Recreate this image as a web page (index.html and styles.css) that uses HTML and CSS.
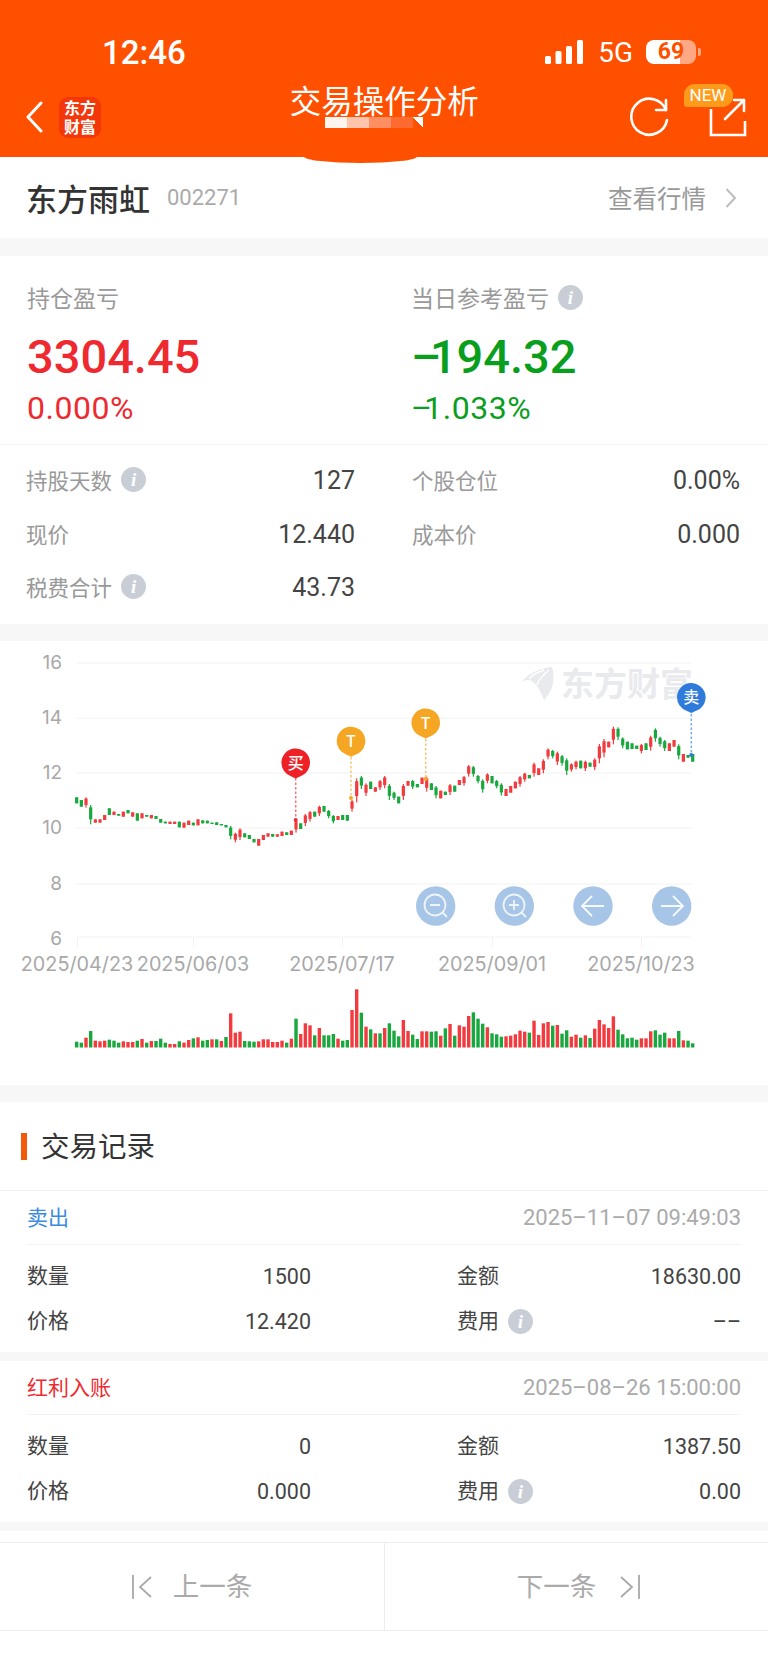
FILE: index.html
```html
<!DOCTYPE html>
<html lang="zh-CN">
<head>
    <meta charset="UTF-8">
    <meta name="viewport" content="width=device-width, initial-scale=1.0">
    <title>交易操作分析</title>
    <link rel="stylesheet" href="styles.css">
</head>
<body>
    <div class="page">
        <header class="header">
            <div class="status">
                <span class="time">12:46</span>
                <div class="status-right">
                    <svg class="signal" width="38" height="24" viewBox="0 0 38 24">
                        <rect x="0" y="16" width="6" height="8" rx="1.5"/>
                        <rect x="10.500" y="11" width="6" height="13" rx="1.5"/>
                        <rect x="21" y="6" width="6" height="18" rx="1.5"/>
                        <rect x="32" y="0" width="6" height="24" rx="1.5"/>
                    </svg>
                    <span class="network">5G</span>
                    <span class="battery">69</span>
                </div>
            </div>
            <div class="nav">
                <div class="nav-left">
                    <svg class="back" width="18" height="32" viewBox="0 0 18 32">
                        <path d="M16 2 L3 16 L16 30" fill="none" stroke="#fff" stroke-width="3" stroke-linecap="round" stroke-linejoin="round"/>
                    </svg>
                    <div class="logo">东方<br>财富</div>
                </div>
                <div class="title">交易操作分析</div>
                <div class="nav-right">
                    <svg class="refresh" width="40" height="40" viewBox="0 0 40 40">
                        <path d="M37 13 A18 18 0 1 0 38 23" fill="none" stroke="#fff" stroke-width="2.600" stroke-linecap="round"/>
                        <path d="M27 13 H37 V3" fill="none" stroke="#fff" stroke-width="2.600" stroke-linecap="round" stroke-linejoin="round"/>
                    </svg>
                    <div class="share-box">
                        <svg class="share" width="38" height="40" viewBox="0 0 38 40">
                            <path d="M2 12 V38 H36 V24" fill="none" stroke="#fff" stroke-width="2.600"/>
                            <path d="M16 22 L35 3 M25 3 H35 V14" fill="none" stroke="#fff" stroke-width="2.600" stroke-linecap="round" stroke-linejoin="round"/>
                        </svg>
                        <span class="new-badge">NEW</span>
                    </div>
                </div>
            </div>
            <div class="blob"></div>
            <div class="mosaic">
                <i class="m1"></i><i class="m2"></i><i class="m3"></i><i class="m4"></i><i class="m5"></i>
            </div>
        </header>

        <section class="stock">
            <div class="stock-name">
                <span class="name">东方雨虹</span>
                <span class="code">002271</span>
            </div>
            <div class="stock-link">
                <span>查看行情</span>
                <svg width="12" height="22" viewBox="0 0 12 22">
                    <path d="M1.500 2 L10 11 L1.500 20" fill="none" stroke="#bdbdbd" stroke-width="2"/>
                </svg>
            </div>
        </section>

        <section class="summary">
            <div class="pl">
                <div class="pl-col">
                    <div class="pl-label">持仓盈亏</div>
                    <div class="pl-value red">3304.45</div>
                    <div class="pl-rate red">0.000%</div>
                </div>
                <div class="pl-col">
                    <div class="pl-label">当日参考盈亏<span class="info">i</span></div>
                    <div class="pl-value green"><span class="dash">–</span>194.32</div>
                    <div class="pl-rate green"><span class="dash">–</span>1.033%</div>
                </div>
            </div>
            <div class="stats">
                <div class="stat"><span class="stat-label">持股天数<span class="info">i</span></span><span class="stat-value">127</span></div>
                <div class="stat"><span class="stat-label">个股仓位</span><span class="stat-value">0.00%</span></div>
                <div class="stat"><span class="stat-label">现价</span><span class="stat-value">12.440</span></div>
                <div class="stat"><span class="stat-label">成本价</span><span class="stat-value">0.000</span></div>
                <div class="stat"><span class="stat-label">税费合计<span class="info">i</span></span><span class="stat-value">43.73</span></div>
            </div>
        </section>

        <section class="chart">
            <svg class="chart-svg" width="768" height="444" viewBox="0 641 768 444">
                <g class="grid">
                    <path d="M77 663 H691 M77 718 H691 M77 773 H691 M77 828 H691 M77 884 H691 M77 937 H691"/>
                    <path d="M77.500 937 V947 M193.500 937 V947 M342.500 937 V947 M492.500 937 V947 M641.500 937 V947"/>
                </g>
                <g class="watermark">
                    <path d="M552 667 C556 680 552 692 544 700 C541 692 538 686 532 681 C528 679 525 680 522 682 C527 674 540 668 552 667 Z"/>
                    <path class="watermark-cut" d="M549 670 C544 674 539 679 537 685 M544 670 C538 672 532 675 529 679"/>
                    <text x="561" y="696">东方财富</text>
                </g>
                <g class="y-labels">
                    <text x="62" y="669">16</text>
                    <text x="62" y="724">14</text>
                    <text x="62" y="779">12</text>
                    <text x="62" y="834">10</text>
                    <text x="62" y="890">8</text>
                    <text x="62" y="945">6</text>
                </g>
                <g class="x-labels">
                    <text x="77" y="971">2025/04/23</text>
                    <text x="193" y="971">2025/06/03</text>
                    <text x="342" y="971">2025/07/17</text>
                    <text x="492" y="971">2025/09/01</text>
                    <text x="641" y="971">2025/10/23</text>
                </g>
                <g id="candles"></g>
                <g id="volume"></g>

                <path class="pin-line" d="M295.700 778 V820" stroke="#f2525a"/>
                <circle cx="295.700" cy="820" r="2" fill="#ee2a30"/>
                <path d="M281.400 762.700 A14.300 14.300 0 1 1 300.500 776.200 L295.700 778.500 L290.900 776.200 A14.300 14.300 0 0 1 281.400 762.700 Z" fill="#ee2126"/>
                <text class="pin-text" x="295.700" y="768.500">买</text>

                <path class="pin-line" d="M351 757 V798" stroke="#f6b64a"/>
                <circle cx="351" cy="798" r="2" fill="#f5a623"/>
                <path d="M336.700 741 A14.300 14.300 0 1 1 355.800 754.500 L351 756.800 L346.200 754.500 A14.300 14.300 0 0 1 336.700 741 Z" fill="#f5a623"/>
                <text class="pin-text" x="351" y="747">T</text>

                <path class="pin-line" d="M425.700 739 V779" stroke="#f6b64a"/>
                <circle cx="425.700" cy="779" r="2" fill="#f5a623"/>
                <path d="M411.400 722.700 A14.300 14.300 0 1 1 430.500 736.200 L425.700 738.500 L420.900 736.200 A14.300 14.300 0 0 1 411.400 722.700 Z" fill="#f5a623"/>
                <text class="pin-text" x="425.700" y="729">T</text>

                <path class="pin-line" d="M691.300 714 V755" stroke="#5a96e2"/>
                <circle cx="691.300" cy="755" r="2" fill="#2f7bdc"/>
                <path d="M677 697.300 A14.300 14.300 0 1 1 696.100 710.800 L691.300 713.100 L686.500 710.800 A14.300 14.300 0 0 1 677 697.300 Z" fill="#2f7bdc"/>
                <text class="pin-text" x="691.300" y="703">卖</text>

                <g class="zoom-btn">
                    <circle cx="435.700" cy="906" r="19.700"/>
                    <g class="zoom-icon">
                        <circle cx="435" cy="905" r="10.500"/>
                        <path d="M430 905 H440 M442.500 912.500 L447 917"/>
                    </g>
                    <circle cx="514.300" cy="906" r="19.700"/>
                    <g class="zoom-icon">
                        <circle cx="514" cy="905" r="10.500"/>
                        <path d="M509 905 H519 M514 900 V910 M521.500 912.500 L526 917"/>
                    </g>
                    <circle cx="593" cy="906" r="19.700"/>
                    <path class="zoom-icon" d="M604 906 H582 M592 896 L582 906 L592 916"/>
                    <circle cx="671.700" cy="906" r="19.700"/>
                    <path class="zoom-icon" d="M661 906 H683 M673 896 L683 906 L673 916"/>
                </g>
            </svg>
        </section>

        <section class="records">
            <h2 class="records-title"><span>交易记录</span></h2>
            <div class="record">
                <div class="record-head">
                    <span class="record-type blue">卖出</span>
                    <span class="record-time">2025–11–07 09:49:03</span>
                </div>
                <div class="record-body">
                    <div class="cell"><span class="cell-label">数量</span><span class="cell-value">1500</span></div>
                    <div class="cell"><span class="cell-label">金额</span><span class="cell-value">18630.00</span></div>
                    <div class="cell"><span class="cell-label">价格</span><span class="cell-value">12.420</span></div>
                    <div class="cell"><span class="cell-label">费用<span class="info">i</span></span><span class="cell-value">––</span></div>
                </div>
            </div>
            <div class="record">
                <div class="record-head">
                    <span class="record-type red">红利入账</span>
                    <span class="record-time">2025–08–26 15:00:00</span>
                </div>
                <div class="record-body">
                    <div class="cell"><span class="cell-label">数量</span><span class="cell-value">0</span></div>
                    <div class="cell"><span class="cell-label">金额</span><span class="cell-value">1387.50</span></div>
                    <div class="cell"><span class="cell-label">价格</span><span class="cell-value">0.000</span></div>
                    <div class="cell"><span class="cell-label">费用<span class="info">i</span></span><span class="cell-value">0.00</span></div>
                </div>
            </div>
        </section>

        <footer class="footer">
            <div class="pager">
                <div class="pager-btn">
                    <svg width="20" height="26" viewBox="0 0 20 26">
                        <path d="M1 1 V25 M19 3 L8 13 L19 23" fill="none" stroke="#a8a8a8" stroke-width="1.800"/>
                    </svg>
                    <span class="pager-text">上一条</span>
                </div>
                <div class="pager-btn next">
                    <span class="pager-text">下一条</span>
                    <svg width="20" height="26" viewBox="0 0 20 26">
                        <path d="M19 1 V25 M1 3 L12 13 L1 23" fill="none" stroke="#a8a8a8" stroke-width="1.800"/>
                    </svg>
                </div>
            </div>
        </footer>
    </div>

    <script src="chart.js"></script>
</body>
</html>
```

FILE: styles.css
```css
body {
    margin: 0;
    font-family: Roboto, "Noto Sans CJK SC", sans-serif;
    background-color: #fff;
    color: #444;
}

.page {
    width: 768px;
    min-height: 1666px;
    background-color: #f7f7f7;
    display: flex;
    flex-direction: column;
}

.red {
    color: #ee2a30;
}

.green {
    color: #0a9e1e;
}

.blue {
    color: #3d8ae0;
}

/* header */
.header {
    position: relative;
    height: 157px;
    background-color: #ff5000;
    color: #fff;
}

.status {
    height: 60px;
    padding: 22px 72px 0 102px;
    display: flex;
    justify-content: space-between;
    align-items: center;
}

.time {
    font-size: 33px;
    font-weight: 500;
}

.status-right {
    display: flex;
    align-items: center;
}

.signal {
    fill: #fff;
    margin-right: 15px;
}

.network {
    font-size: 28px;
    margin-right: 13px;
}

.battery {
    position: relative;
    width: 50px;
    height: 24px;
    border-radius: 8px;
    background: linear-gradient(90deg, #fff 68%, #ffa884 68%);
    color: #ff5000;
    font-size: 23px;
    font-weight: 700;
    line-height: 24px;
    text-align: center;
}

.battery::after {
    content: "";
    position: absolute;
    left: 52px;
    top: 8px;
    width: 3px;
    height: 8px;
    border-radius: 0 2px 2px 0;
    background-color: #ffa884;
}

.nav {
    height: 70px;
    padding: 0 21.500px 0 25px;
    display: grid;
    grid-template-columns: 1fr auto 1fr;
    align-items: center;
}

.nav-left {
    display: flex;
    align-items: center;
    gap: 16px;
}

.logo {
    width: 42px;
    height: 41px;
    border-radius: 9px;
    background-color: #f4370b;
    font-size: 16px;
    font-weight: 700;
    line-height: 19px;
    padding-top: 2px;
    box-sizing: border-box;
    text-align: center;
}

.title {
    font-size: 31.500px;
    line-height: 34px;
    margin: 0 3px 28px 0;
}

.nav-right {
    display: flex;
    justify-content: flex-end;
    align-items: center;
    gap: 40px;
}

.share-box {
    position: relative;
    display: flex;
}

.new-badge {
    position: absolute;
    left: -25px;
    top: -13px;
    width: 49px;
    height: 23px;
    border-radius: 11px 11px 11px 3px;
    background-color: #ff9b1a;
    font-size: 17px;
    line-height: 23px;
    text-align: center;
}

.blob {
    position: absolute;
    left: 304px;
    top: 150px;
    width: 113px;
    height: 13px;
    border-radius: 50%;
    background-color: #ff5000;
}

.mosaic {
    position: absolute;
    left: 325px;
    top: 117px;
    display: flex;
}

.mosaic i {
    width: 22px;
    height: 11px;
}

.mosaic .m1 {
    background-color: #fff5f0;
}

.mosaic .m2 {
    background-color: #ffc4ac;
}

.mosaic .m3 {
    background-color: #ff8f62;
}

.mosaic .m4 {
    background-color: #ff6a30;
}

.mosaic .m5 {
    width: 10px;
    background: linear-gradient(45deg, #fff 50%, #ff5000 50%);
    transform: scaleY(-1) scaleX(-1);
}

/* stock row */
.stock {
    height: 81px;
    padding: 0 31px 0 26px;
    background-color: #fff;
    display: flex;
    justify-content: space-between;
    align-items: center;
    margin-bottom: 18px;
}

.stock-name {
    display: flex;
    align-items: center;
    gap: 17px;
}

.name {
    font-size: 31px;
    font-weight: 500;
    color: #333;
}

.code {
    font-size: 22px;
    color: #aaa;
}

.stock-link {
    display: flex;
    align-items: center;
    gap: 19px;
    font-size: 24.500px;
    color: #999;
}

/* summary */
.summary {
    background-color: #fff;
    margin-bottom: 17px;
}

.pl {
    padding: 26px 0 18px 27px;
    display: grid;
    grid-template-columns: 384px 1fr;
    border-bottom: 1px solid #f2f2f2;
}

.pl-label {
    display: flex;
    align-items: center;
    height: 30px;
    font-size: 23px;
    color: #999;
}

.pl-value {
    height: 56px;
    line-height: 56px;
    margin-top: 17px;
    font-size: 47px;
    font-weight: 500;
}

.dash {
    letter-spacing: -0.24em;
}

.pl-rate {
    height: 36px;
    line-height: 36px;
    margin-top: 5px;
    font-size: 32px;
    letter-spacing: 0.5px;
}

.info {
    display: inline-block;
    width: 25px;
    height: 25px;
    margin-left: 9px;
    border-radius: 50%;
    background-color: #c9ced6;
    color: #fff;
    font-family: "Liberation Serif", serif;
    font-size: 19px;
    font-style: italic;
    font-weight: 700;
    line-height: 25px;
    text-align: center;
}

.stats {
    padding: 9px 28px 9.500px 26px;
    display: grid;
    grid-template-columns: 329px 328px;
    column-gap: 57px;
    grid-auto-rows: 53.500px;
}

.stat {
    display: flex;
    justify-content: space-between;
    align-items: center;
}

.stat-label {
    display: flex;
    align-items: center;
    padding-bottom: 2px;
    font-size: 21.500px;
    color: #999;
}

.stat-value {
    font-size: 25px;
    color: #444;
}

/* chart */
.chart {
    background-color: #fff;
    margin-bottom: 17px;
}

.chart-svg {
    display: block;
}

.grid path {
    fill: none;
    stroke: #f2f2f2;
    stroke-width: 1;
}

.watermark {
    fill: #e9eaee;
}

.watermark-cut {
    fill: none;
    stroke: #fff;
    stroke-width: 1.500;
}

.watermark text {
    font-family: "Noto Sans CJK SC", sans-serif;
    font-size: 33px;
    font-weight: 700;
}

.y-labels text,
.x-labels text {
    font-family: Inter, sans-serif;
    fill: #a8a8a8;
}

.y-labels text {
    font-size: 19px;
    text-anchor: end;
}

.x-labels text {
    font-size: 19.800px;
    text-anchor: middle;
}

.pin-line {
    fill: none;
    stroke-width: 1.500;
    stroke-dasharray: 2.500 2;
    opacity: 0.8;
}

.pin-text {
    font-family: "Noto Sans CJK SC", sans-serif;
    font-size: 16px;
    font-weight: 500;
    fill: #fff;
    text-anchor: middle;
}

.zoom-btn > circle {
    fill: #a7c5e6;
}

.zoom-icon,
.zoom-icon circle,
.zoom-icon path {
    fill: none;
    stroke: #fff;
    stroke-width: 1.800;
    opacity: 0.9;
}

/* records */
.records-title {
    margin: 0;
    height: 88px;
    padding-left: 21px;
    background-color: #fff;
    border-bottom: 1px solid #f2f2f2;
    display: flex;
    align-items: center;
    font-size: 28.500px;
    font-weight: 400;
    color: #333;
}

.records-title::before {
    content: "";
    width: 6px;
    height: 27px;
    margin-right: 14px;
    background-color: #f05a0a;
}

.records-title span {
    padding-bottom: 4px;
}

.record {
    padding: 0 27px;
    background-color: #fff;
    margin-bottom: 9px;
}

.record-head {
    height: 53px;
    border-bottom: 1px solid #f2f2f2;
    display: flex;
    justify-content: space-between;
    align-items: center;
}

.record-type {
    padding-bottom: 4px;
    font-size: 21px;
}

.record-time {
    font-size: 22px;
    color: #aaa;
}

.record-body {
    padding: 8.500px 0;
    display: grid;
    grid-template-columns: 284px 284px;
    column-gap: 146px;
    grid-auto-rows: 45px;
}

.cell {
    display: flex;
    justify-content: space-between;
    align-items: center;
}

.cell-label {
    display: flex;
    align-items: center;
    padding-bottom: 4px;
    font-size: 21px;
    color: #444;
}

.cell-label .info {
    margin-top: 4px;
}

.cell-value {
    font-size: 21.500px;
    color: #444;
}

/* footer */
.footer {
    flex: 1;
    padding-top: 11px;
    background-color: #fff;
}

.pager {
    height: 87px;
    border-top: 1px solid #ececec;
    border-bottom: 1px solid #ececec;
    display: grid;
    grid-template-columns: 385px 1fr;
}

.pager-btn {
    display: flex;
    justify-content: center;
    align-items: center;
    gap: 21px;
    font-size: 26.500px;
    color: #aaa;
}

.pager-btn.next {
    gap: 24px;
    padding-left: 4px;
}

.pager-text {
    padding-bottom: 4px;
}

.pager-btn:first-child {
    border-right: 1px solid #ececec;
}
```

FILE: chart.js
```js
// y values are read off the 3x crop: page y = 640 + v / 3
const candleData = `472-490g 480-500g 472-503r 495-553g 538-548r 538-548r 525-540r 505-525g 515-525r 522-527g
515-530r 510-520g 517-530r 520-542g 520-535r 525-530g 525-535r 528-537g 537-548g 545-550g
545-552r 545-552r 545-562g 548-563r 542-555r 548-556g 538-556r 541-550g 542-550g 548-552g
547-555g 552-556g 555-562g 558-598g 578-607r 565-600r 580-592g 585-597g 597-607g 597-617r
585-600r 580-590r 582-590g 583-590r 575-588r 577-585g 572-585r 540-578r 550-567g 522-558r
513-545r 515-530g 497-528r 498-515g 510-535g 525-550g 528-540r 525-540g 525-542g 480-515r
415-487r 408-447g 430-468r 425-447g 442-455r 420-450r 408-445r
432-480g 455-480g 470-490g 432-480r 423-437r 420-447g 432-442g 413-432r 410-455r
430-450g 438-475g 452-475r 455-465g 432-465r 437-455g 420-435r 408-437r 375-410r 378-410g
405-430g 418-458g 400-430r 408-430g 420-445g 430-467g 447-468r 438-458r 425-445r 408-440r
398-425r 405-415g 368-410r 385-405r 358-400r 325-358r 330-355g 335-375r 345-377g 355-405g
370-395r 362-388r 362-385g 362-393r 368-380g 355-390r 312-370r 297-352r 305-322r 260-313r
262-300g 292-325g 305-328g 310-327g 317-327g 312-340r 310-330g 287-332r 265-305g 290-320g
300-333g 310-333r 300-320r 313-358g 342-365r 345-353g 342-365g`.split(/\s+/);

const volumeData = `215g 218g 203r 183g 212r 214r 212r 209g 212g 218g 214r 216r 216r 212g 207r 218g 213r 213g 206g 218g
222r 222r 214g 218r 210r 205g 202r 212g 210g 208r 208g 213r 201g 130r 188r 185r 213g 214g 215g 214r
208r 208r 216r 216r 212r 218g 206r 146g 192r 160r 166r 196g 174r 196g 196g 192g 206r 212g 210g 120r
58r 128g 170r 178g 190r 190g 174r 160g 182g 199g
150r 183r 194g 207g 184r 184r 185g 184g 197r 175g 162r 197g 166r 170r 138r 127g 146g 161g 172r 190g
193g 200g 199r 197r 193r 182r 185r 188g 152r 195r 160r 156r 167g 165r 191g 181g 200r 194r 203g 196r
204g 176r 150r 163r 174r 139r 179g 193g 205g 203g 209g 205r 205r 184r 181g 194g 188g 205r 205r 183g
211r 212g 220g`.split(/\s+/);

const RED = '#f23a3f';
const GREEN = '#17a83e';
const START_X = 76.67;
const STEP = 4.667;
const SVG_NS = 'http://www.w3.org/2000/svg';

function addRect(parent, x, y, w, h, fill) {
    const rect = document.createElementNS(SVG_NS, 'rect');
    rect.setAttribute('x', x.toFixed(2));
    rect.setAttribute('y', y.toFixed(2));
    rect.setAttribute('width', w);
    rect.setAttribute('height', h.toFixed(2));
    rect.setAttribute('fill', fill);
    parent.appendChild(rect);
}

function drawCandles() {
    const group = document.getElementById('candles');
    candleData.forEach((item, i) => {
        const parts = item.slice(0, -1).split('-').map(Number);
        const color = item.endsWith('r') ? RED : GREEN;
        const x = START_X + i * STEP;
        const top = 640 + parts[0] / 3;
        const bottom = 640 + parts[1] / 3;
        const height = bottom - top;

        addRect(group, x - 0.6, top, 1.2, height, color);
        // tall candles keep a visible wick, short ones are all body
        if (height > 8) {
            addRect(group, x - 1.6, top + height * 0.12, 3.2, height * 0.62, color);
        } else {
            addRect(group, x - 1.6, top, 3.2, height, color);
        }
    });
}

function drawVolume() {
    const group = document.getElementById('volume');
    volumeData.forEach((item, i) => {
        const color = item.endsWith('r') ? RED : GREEN;
        const top = 970 + parseInt(item, 10) / 3;
        addRect(group, START_X + i * STEP - 1.7, top, 3.4, 1047.5 - top, color);
    });
}

drawCandles();
drawVolume();
```
